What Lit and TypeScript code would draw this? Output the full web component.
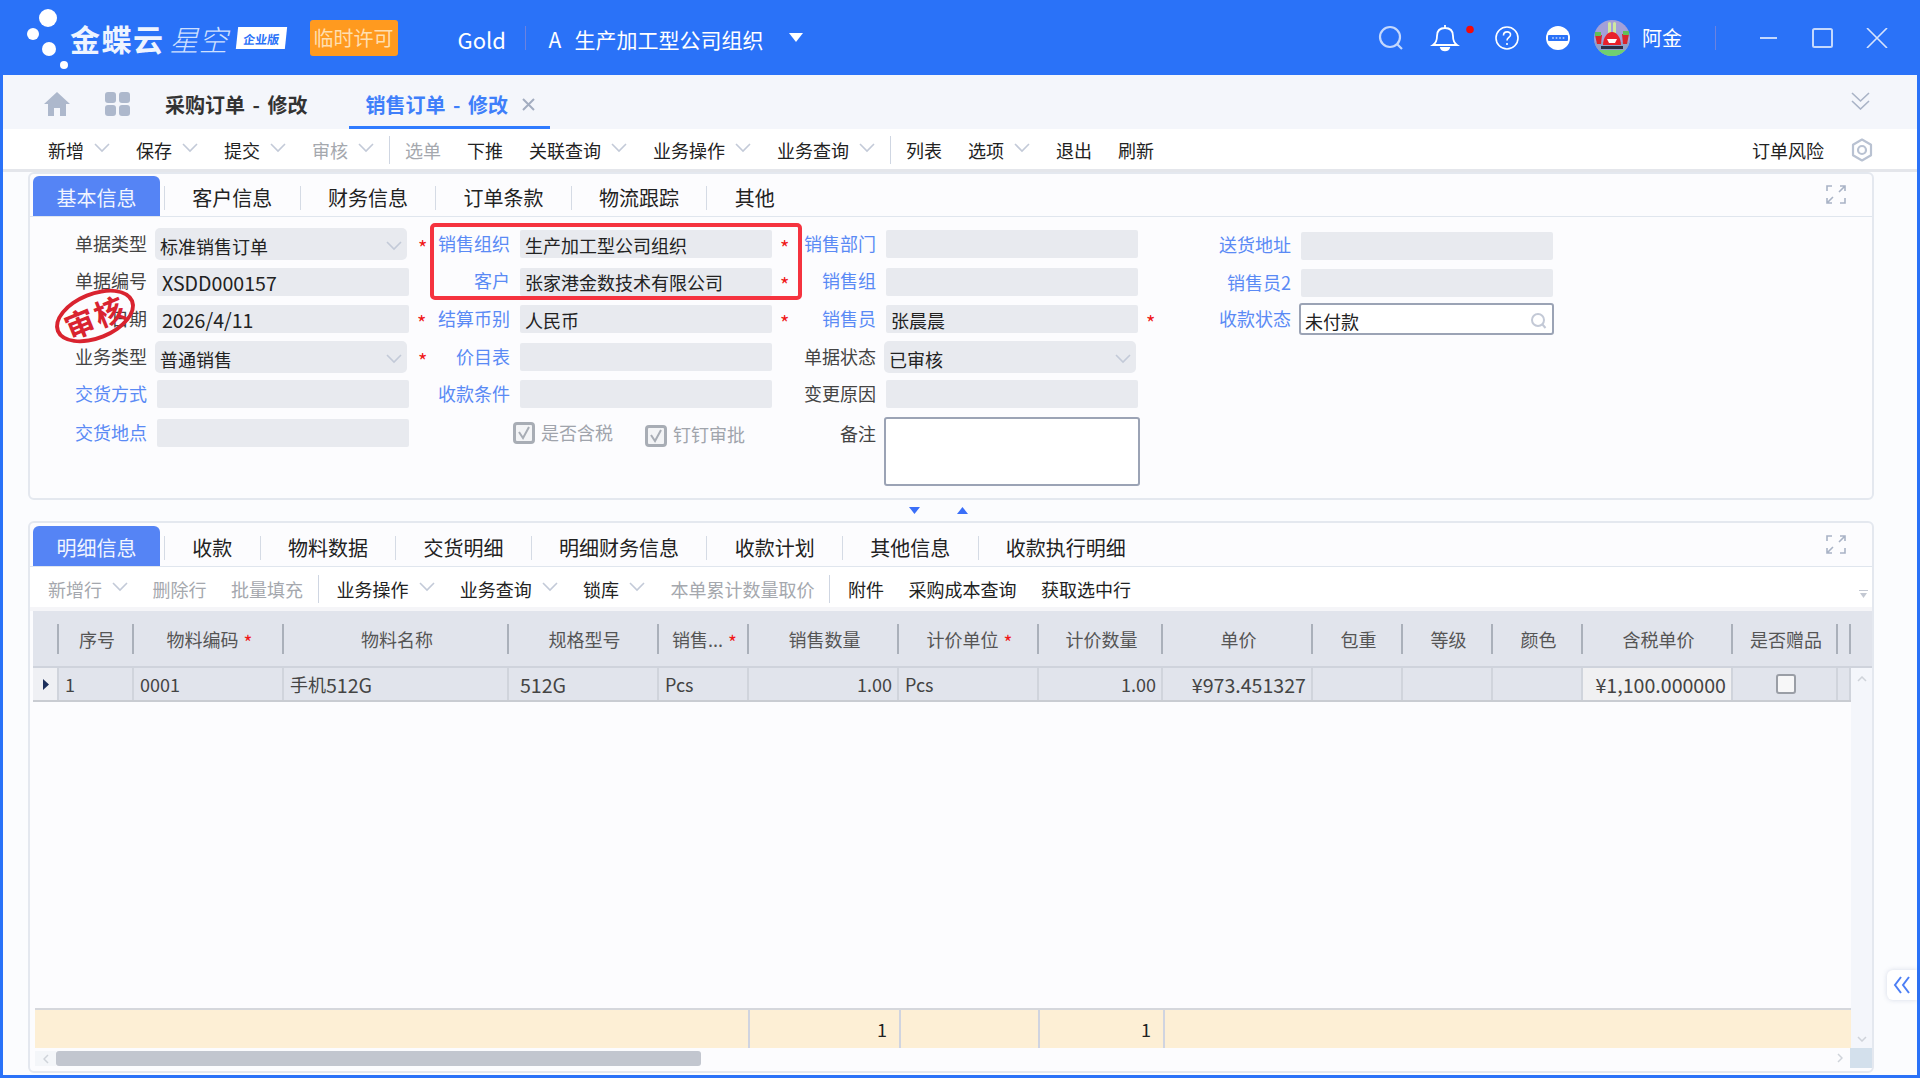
import { LitElement, html, css, svg, nothing } from "lit";
import { customElement } from "lit/decorators.js";

const chevron = html`<svg class="chev" width="16" height="10" viewBox="0 0 16 10"><path d="M1 1l7 7 7-7" fill="none" stroke="#c3cad8" stroke-width="1.6"/></svg>`;

const expand = html`<svg class="expand" width="20" height="19" viewBox="0 0 20 19" fill="none" stroke="#a9b3c6" stroke-width="1.6">
  <path d="M1 6V1h5M19 6V1h-5M13 7l6-6M1 13v5h5M19 13v5h-5M7 12l-6 6"/>
</svg>`;

type Item = { t?: string; gray?: boolean; arrow?: boolean; sep?: boolean };

const mainTools: Item[] = [
  { t: "新增", arrow: true }, { t: "保存", arrow: true }, { t: "提交", arrow: true },
  { t: "审核", arrow: true, gray: true }, { sep: true }, { t: "选单", gray: true }, { t: "下推" },
  { t: "关联查询", arrow: true }, { t: "业务操作", arrow: true }, { t: "业务查询", arrow: true }, { sep: true },
  { t: "列表" }, { t: "选项", arrow: true }, { t: "退出" }, { t: "刷新" },
];

const gridTools: Item[] = [
  { t: "新增行", arrow: true, gray: true }, { t: "删除行", gray: true }, { t: "批量填充", gray: true }, { sep: true },
  { t: "业务操作", arrow: true }, { t: "业务查询", arrow: true }, { t: "锁库", arrow: true },
  { t: "本单累计数量取价", gray: true }, { sep: true }, { t: "附件" }, { t: "采购成本查询" }, { t: "获取选中行" },
];

type Field = { label: string; value?: string; link?: boolean; kind?: string; star?: boolean; low?: boolean; num?: boolean };

const fields: (Field | null)[] = [
  { label: "单据类型", value: "标准销售订单", kind: "select", star: true },
  { label: "销售组织", value: "生产加工型公司组织", link: true, star: true },
  { label: "销售部门", link: true },
  { label: "送货地址", link: true, low: true },

  { label: "单据编号", value: "XSDD000157", num: true },
  { label: "客户", value: "张家港金数技术有限公司", link: true, star: true },
  { label: "销售组", link: true },
  { label: "销售员2", link: true, low: true },

  { label: "日期", value: "2026/4/11", star: true, num: true },
  { label: "结算币别", value: "人民币", link: true, star: true },
  { label: "销售员", value: "张晨晨", link: true, star: true },
  { label: "收款状态", value: "未付款", link: true, kind: "search" },

  { label: "业务类型", value: "普通销售", kind: "select", star: true },
  { label: "价目表", link: true },
  { label: "单据状态", value: "已审核", kind: "select" },
  null,

  { label: "交货方式", link: true },
  { label: "收款条件", link: true },
  { label: "变更原因" },
  null,
];

type Col = { w: number; h?: string; v?: unknown; star?: boolean; right?: boolean; cls?: string };

const cols: Col[] = [
  { w: 26, cls: "arrow" },
  { w: 75, h: "序号", v: "1" },
  { w: 150, h: "物料编码", v: "0001", star: true },
  { w: 225, h: "物料名称", v: html`手机<span class="num">512G</span>` },
  { w: 150, h: "规格型号", v: html`<span class="num">512G</span>`, cls: "pad" },
  { w: 90, h: "销售...", v: "Pcs", star: true },
  { w: 150, h: "销售数量", v: "1.00", right: true },
  { w: 140, h: "计价单位", v: "Pcs", star: true },
  { w: 124, h: "计价数量", v: "1.00", right: true },
  { w: 150, h: "单价", v: html`<span class="num">¥973.451327</span>`, right: true },
  { w: 90, h: "包重" },
  { w: 90, h: "等级" },
  { w: 90, h: "颜色" },
  { w: 150, h: "含税单价", v: html`<span class="num">¥1,100.000000</span>`, right: true, cls: "light" },
  { w: 105, h: "是否赠品", cls: "check" },
  { w: 13 },
];

@customElement("app-root")
export class AppRoot extends LitElement {
  static override styles = css`
    :host {
      display: block;
      width: 1920px;
      height: 1078px;
      overflow: hidden;
      font-family: "Noto Sans CJK SC", "Liberation Sans", sans-serif;
      font-size: 18px;
      color: #222;
    }
    .num { font-size: 19.6px; }
    .app {
      height: 1078px;
      background: #2a72f8;
      display: flex;
      flex-direction: column;
    }
    .top {
      height: 75px;
      flex: none;
      display: flex;
      align-items: center;
      padding: 0 32px 0 24px;
      color: #fff;
      font-size: 21px;
    }
    .brand { font-size: 30px; font-weight: 700; letter-spacing: 1.5px; color: #eef4ff; }
    .brand2 { font-size: 29px; font-weight: 300; font-style: italic; margin-left: 5px; color: #cfe0ff; }
    .badge {
      margin-left: 9px;
      width: 49px;
      height: 22px;
      background: #fff;
      color: #2a72f8;
      font-size: 12px;
      font-weight: 700;
      display: flex;
      align-items: center;
      justify-content: center;
      transform: skewX(-6deg);
      white-space: nowrap;
    }
    .licence {
      margin-left: 24px;
      width: 88px;
      height: 36px;
      border-radius: 3px;
      background: #ff9a1f;
      color: #ffdfb0;
      font-size: 20px;
      display: flex;
      align-items: center;
      justify-content: center;
    }
    .gold { margin-left: 60px; margin-top: 3px; width: 47px; font-size: 22px; }
    .vsep { width: 1px; height: 24px; background: #6b82e0; }
    .gold + .vsep { margin-left: 20px; }
    .a { margin-left: 23px; margin-top: 2px; width: 26px; }
    .org { margin-top: 2px; }
    .tri { margin-left: 25px; }
    .search { margin-left: auto; }
    .bell { margin-left: 27px; overflow: visible; }
    .help { margin-left: 36px; }
    .mins { margin-left: 27px; }
    .avatar { margin-left: 24px; }
    .uname { margin-left: 12px; font-size: 20px; width: 40px; white-space: nowrap; }
    .uname + .vsep { margin-left: 33px; }
    .winmin { margin-left: 44px; }
    .winmax { margin-left: 35px; }
    .winclose { margin-left: 33px; }

    .content {
      flex: 1;
      margin: 0 3px 3px;
      background: #fbfcfe;
      display: flex;
      flex-direction: column;
      position: relative;
      min-height: 0;
    }
    .tabs {
      height: 54px;
      flex: none;
      background: #f4f6fb;
      display: flex;
      align-items: center;
      padding: 4px 0 0 41px;
      box-sizing: border-box;
    }
    .tabs .grid4 { margin-left: 35px; }
    .doc { margin-left: 35px; font-size: 20px; font-weight: 700; color: #333; word-spacing: 3px; white-space: nowrap; }
    .doc.on {
      margin: -4px 0 0 42px;
      height: 54px;
      width: 201px;
      box-sizing: border-box;
      padding: 7px 0 0 16px;
      color: #3f7ffa;
      border-bottom: 3px solid #2f7bff;
      display: flex;
      align-items: center;
    }
    .doc.on svg { margin-left: 13px; }
    .more { margin-left: auto; margin-right: 47px; margin-top: -6px; }

    .bar {
      display: flex;
      align-items: center;
      background: #fff;
      height: 40px;
      flex: none;
      box-sizing: border-box;
      padding-top: 2px;
      white-space: nowrap;
      color: #222;
    }
    .bar.main { padding-left: 45px; padding-right: 44px; box-shadow: 0 3px 0 #e4e6eb; }
    .bar.sub { padding-left: 18px; padding-top: 3px; }
    .tool { margin-right: 26px; display: flex; align-items: center; }
    .tool.gray { color: #a5a8ae; }
    .chev { margin-left: 10px; margin-top: -4px; }
    .tsep { width: 1px; height: 28px; background: #cfd6e2; margin-left: -11px; margin-right: 15px; }
    .sub .tsep { margin-left: -10px; margin-right: 18px; }
    .sub .tool { margin-right: 24.5px; }
    .sub .tool:not(.gray) .chev { margin-right: 0.8px; }
    .risk { margin-left: auto; margin-right: 27px; }
    .overflow { margin-left: auto; margin-right: 4px; margin-top: 12px; }

    .panel {
      margin: 3px 43px 0 25px;
      border: 2px solid #e4e8ef;
      border-radius: 6px;
      background: #fcfcfe;
      position: relative;
      display: flex;
      flex-direction: column;
    }
    .panel.head { height: 328px; box-sizing: border-box; }
    .panel.detail { margin-top: 0; flex: 1; min-height: 0; margin-bottom: 2px; }
    .tabline {
      height: 41px;
      flex: none;
      box-sizing: border-box;
      margin-top: 2px;
      padding-left: 3px;
      display: flex;
      align-items: flex-end;
      border-bottom: 1px solid #e0e6ee;
      font-size: 20px;
      color: #222;
    }
    .detail .tabline { margin-top: 3px; }
    .tabline .tab {
      height: 40px;
      box-sizing: border-box;
      display: flex;
      align-items: center;
      padding: 2px 27.3px 0;
      white-space: nowrap;
    }
    .tabline .tab.on {
      width: 127px;
      justify-content: center;
      padding: 2px 0 0;
      margin-right: 4px;
      background: #5584f5;
      color: #f1f5ff;
      border-radius: 6px 6px 0 0;
    }
    .tabline .div { width: 1px; height: 24px; background: #d5dbe5; margin-bottom: 6px; }
    .tabline .expand { margin-left: auto; margin-right: 26px; margin-bottom: 12px; }

    .form {
      display: grid;
      grid-template-columns: 363px 366px 415px 1fr;
      grid-template-rows: 38px 37px 38px 38px 36px 42px;
      padding: 8px 0 0 45px;
    }
    .field { display: flex; align-items: center; min-width: 0; }
    .field.low { margin-top: 3px; }
    .field.tall { align-items: flex-start; margin-top: 5px; }
    .field.tall .lab { line-height: 32px; }
    .lab { width: 72px; margin-right: 10px; padding-bottom: 3px; text-align: right; color: #444; white-space: nowrap; flex: none; }
    .lab.link { color: #5a8af5; }
    .box {
      width: 252px;
      height: 28px;
      box-sizing: border-box;
      background: #e8eaef;
      border-radius: 2px;
      padding: 1px 5px 0;
      display: flex;
      align-items: center;
      justify-content: space-between;
      color: #222;
      white-space: nowrap;
      flex: none;
    }
    .box.select { height: 32px; margin-left: -2px; border-radius: 5px; padding-top: 3px; }
    .box.select + .star { margin-left: 11px; }
    .box.select .chev { margin: 0; }
    .box.search {
      width: 255px;
      height: 32px;
      margin-left: -2px;
      background: #fff;
      border: 2px solid #9ba3b5;
      border-radius: 3px;
      padding: 3px 4px 0;
    }
    .box.area {
      width: 256px;
      height: 69px;
      margin-left: -2px;
      background: #fff;
      border: 2px solid #9ba3b5;
      border-radius: 3px;
    }
    .star { color: #f01818; font-size: 20px; line-height: 1; margin-left: 8px; padding-top: 7px; }
    .checks { display: flex; align-items: center; padding-left: 75px; color: #a0a4ac; }
    .ck { display: flex; align-items: center; gap: 6px; white-space: nowrap; }
    .ck span { padding-bottom: 3px; }
    .ck + .ck { margin-left: 32px; margin-top: 5px; }

    .redbox {
      position: absolute;
      left: 400px;
      top: 49px;
      width: 372px;
      height: 77px;
      box-sizing: border-box;
      border: 4px solid #f5333f;
      border-radius: 5px;
      pointer-events: none;
    }
    .stamp {
      position: absolute;
      left: 23px;
      top: 118px;
      width: 84px;
      height: 48px;
      box-sizing: border-box;
      border: 4px solid #d9232f;
      border-radius: 50%;
      transform: rotate(-22deg);
      color: #d9232f;
      font-size: 30px;
      font-weight: 700;
      letter-spacing: 2px;
      display: flex;
      align-items: center;
      justify-content: center;
      white-space: nowrap;
    }

    .split {
      height: 21px;
      flex: none;
      display: flex;
      align-items: center;
      padding-left: 906px;
      gap: 37px;
    }

    .gap { height: 4px; flex: none; background: #f5f5f8; }
    .ghead {
      height: 57px;
      flex: none;
      box-sizing: border-box;
      margin-left: 3px;
      display: flex;
      align-items: center;
      background: #e1e4ec;
      border-bottom: 2px solid #cfd3dc;
      color: #555;
    }
    .hcell {
      box-sizing: border-box;
      height: 30px;
      padding-left: 3px;
      border-right: 2px solid #aab0ba;
      display: flex;
      align-items: center;
      justify-content: center;
      gap: 5px;
      white-space: nowrap;
      flex: none;
    }
    .hcell .req { color: #f01818; font-size: 19px; line-height: 1; padding-top: 5px; }
    .gbody { flex: 1; min-height: 0; display: flex; padding-left: 3px; }
    .gleft { flex: 1; display: flex; flex-direction: column; min-width: 0; }
    .rows { flex: 1; }
    .row {
      height: 34px;
      box-sizing: border-box;
      display: flex;
      background: #e1e4ec;
      border-bottom: 2px solid #c9ccd2;
      color: #444;
    }
    .cell {
      box-sizing: border-box;
      flex: none;
      height: 32px;
      padding: 0 5px 0 6px;
      border-right: 2px solid #d0d4dc;
      display: flex;
      align-items: center;
      white-space: pre;
      overflow: hidden;
    }
    .cell.right { justify-content: flex-end; }
    .cell.pad { padding-left: 11px; }
    .cell.light { background: #f0f0f2; }
    .cell.arrow { background: #eff0f4; padding: 0 0 0 10px; }
    .cell.check { justify-content: center; padding: 0 0 0 2px; }
    .cbx { width: 20px; height: 20px; box-sizing: border-box; border: 2px solid #9a9ea6; border-radius: 3px; background: #f7f7f8; }
    .foot {
      height: 40px;
      flex: none;
      box-sizing: border-box;
      margin-left: 2px;
      display: flex;
      background: #fdefd5;
      border-top: 2px solid #d5d7dc;
    }
    .fcell { box-sizing: border-box; flex: none; border-right: 2px solid #d0d4e0; display: flex; align-items: center; justify-content: flex-end; padding-right: 12px; }
    .vbar {
      width: 21px;
      flex: none;
      background: #f4f6fb;
      display: flex;
      flex-direction: column;
      align-items: center;
      justify-content: space-between;
      padding: 8px 0 6px;
      box-sizing: border-box;
    }
    .hbar { height: 23px; flex: none; display: flex; padding-left: 5px; }
    .hleft { width: 21px; height: 15px; margin-top: 3px; background: #f4f6f9; display: flex; align-items: center; justify-content: center; }
    .thumb { width: 645px; height: 15px; margin-top: 3px; border-radius: 3px; background: #c2c6cf; }
    .hright { margin-left: auto; margin-right: 7px; margin-top: 5px; }
    .corner { width: 22px; height: 20px; background: #d3e0ec; flex: none; }

    .handle {
      position: absolute;
      right: 0;
      top: 895px;
      width: 30px;
      height: 30px;
      background: #fff;
      border-radius: 6px 0 0 6px;
      box-shadow: 0 0 5px rgba(80, 100, 150, 0.22);
      display: flex;
      align-items: center;
      justify-content: center;
    }
  `;

  private tools(items: Item[]) {
    return items.map((i) =>
      i.sep
        ? html`<span class="tsep"></span>`
        : html`<span class="tool ${i.gray ? "gray" : ""}">${i.t}${i.arrow ? chevron : nothing}</span>`
    );
  }

  private tabs(names: string[]) {
    return names.map((n, i) =>
      i === 0
        ? html`<span class="tab on">${n}</span><span class="div"></span>`
        : html`<span class="tab">${n}</span>${i < names.length - 1 ? html`<span class="div"></span>` : nothing}`
    );
  }

  private field(f: Field | null) {
    if (!f) return html`<div></div>`;
    let inner;
    if (f.kind === "select") inner = html`<div class="box select">${f.value}${chevron}</div>`;
    else if (f.kind === "search")
      inner = html`<div class="box search">${f.value}<svg width="18" height="18" viewBox="0 0 18 18" fill="none" stroke="#c3c9d6" stroke-width="2"><circle cx="8" cy="8" r="6"/><path d="M12.5 12.5l3 3.5"/></svg></div>`;
    else inner = html`<div class="box"><span class="${f.num ? "num" : ""}">${f.value ?? ""}</span></div>`;
    return html`<div class="field ${f.low ? "low" : ""}">
      <span class="lab ${f.link ? "link" : ""}">${f.label}</span>${inner}${f.star ? html`<span class="star">*</span>` : nothing}
    </div>`;
  }

  private checked(label: string) {
    return html`<span class="ck"
      ><svg width="22" height="22" viewBox="0 0 22 22"><rect x="1.5" y="1.5" width="19" height="19" rx="2.5" fill="#f3f4f6" stroke="#a8adb5" stroke-width="3"/><path d="M6 10l4 6 6-11" fill="none" stroke="#a8adb5" stroke-width="2"/></svg
      ><span>${label}</span></span
    >`;
  }

  private avatar() {
    return svg`<svg class="avatar" width="36" height="36" viewBox="0 0 36 36">
      <defs><clipPath id="av"><circle cx="18" cy="18" r="18"/></clipPath></defs>
      <g clip-path="url(#av)">
        <rect width="36" height="36" fill="#a3a0d8"/>
        <rect y="22" width="36" height="14" fill="#8fa0c8"/>
        <rect x="14" y="2" width="3" height="13" rx="1.5" fill="#cfe8a0"/>
        <rect x="19" y="2" width="3" height="13" rx="1.5" fill="#cfe8a0"/>
        <path d="M18 12c5 0 9 6 9 13H9c0-7 4-13 9-13z" fill="#e8202a"/>
        <path d="M13 19h10l-2 4h-6z" fill="#fff"/>
        <path d="M1 15h7l-1 9H3zM28 14h7l-2 10h-4z" fill="#d8262c"/>
        <rect x="1" y="12" width="6" height="4" fill="#5fbf5a"/>
        <rect x="29" y="11" width="6" height="4" fill="#5fbf5a"/>
        <rect x="7" y="26" width="22" height="3" fill="#2a2f45"/>
        <rect y="30" width="36" height="6" fill="#6fd070"/>
      </g>
    </svg>`;
  }

  override render() {
    return html`
      <div class="app">
        <header class="top">
          <svg width="46" height="75" viewBox="0 0 46 75" fill="#fff">
            <circle cx="24" cy="18" r="9"/><circle cx="9" cy="34" r="6"/><circle cx="25" cy="49" r="7"/><circle cx="40" cy="65" r="4"/>
          </svg>
          <span class="brand">金蝶云</span>
          <span class="brand2">星空</span>
          <span class="badge">企业版</span>
          <span class="licence">临时许可</span>
          <span class="gold">Gold</span>
          <span class="vsep"></span>
          <span class="a">A</span>
          <span class="org">生产加工型公司组织</span>
          <svg class="tri" width="14" height="9" viewBox="0 0 14 9"><path d="M0 0h14L7 9z" fill="#fff"/></svg>

          <svg class="search" width="26" height="26" viewBox="0 0 26 26" fill="none" stroke="#c4d8fd" stroke-width="2.2"><circle cx="12" cy="12" r="10"/><path d="M19 19l5 5"/></svg>
          <svg class="bell" width="28" height="28" viewBox="0 0 28 28" fill="none" stroke="#fff" stroke-width="1.8">
            <path d="M2 21h24c-3-2-4-4-4-9 0-5-3-8-8-8s-8 3-8 8c0 5-1 7-4 9zM14 1v3"/><path d="M10 24h8c-1 3-7 3-8 0z" fill="#fff"/>
            <circle cx="39" cy="5.500" r="3.800" fill="#f50a0a" stroke="none"/>
          </svg>
          <svg class="help" width="24" height="24" viewBox="0 0 24 24" fill="none" stroke="#fff" stroke-width="1.6">
            <circle cx="12" cy="12" r="11"/><path d="M8.5 9.5c0-5 7.5-4.5 7-.5-.3 2.5-3.5 2.5-3.5 5.5"/><path d="M12 17v2"/>
          </svg>
          <svg class="mins" width="24" height="24" viewBox="0 0 24 24">
            <circle cx="12" cy="12" r="12" fill="#fff"/><rect x="2" y="9" width="20" height="6" rx="1" fill="#2a72f8"/>
            <g fill="#a9c6fb"><circle cx="7" cy="12" r="1"/><circle cx="10.5" cy="12" r="1"/><circle cx="14" cy="12" r="1"/><circle cx="17.5" cy="12" r="1"/></g>
          </svg>
          ${this.avatar()}
          <span class="uname">阿金</span>
          <span class="vsep"></span>
          <svg class="winmin" width="17" height="2" viewBox="0 0 17 2"><rect width="17" height="2" fill="#c4d8fd"/></svg>
          <svg class="winmax" width="21" height="20" viewBox="0 0 21 20" fill="none" stroke="#c4d8fd" stroke-width="2"><rect x="1" y="1" width="19" height="18" rx="1.5"/></svg>
          <svg class="winclose" width="22" height="20" viewBox="0 0 22 20" fill="none" stroke="#d6e3fd" stroke-width="1.6"><path d="M1 0l20 20M21 0L1 20"/></svg>
        </header>

        <div class="content">
          <nav class="tabs">
            <svg width="26" height="24" viewBox="0 0 26 24" fill="#adb8cc"><path d="M13 0L0 12h4v12h6v-8h6v8h6V12h4z"/></svg>
            <svg class="grid4" width="25" height="24" viewBox="0 0 25 24" fill="#adb8cc">
              <rect width="11" height="11" rx="3"/><rect x="14" width="11" height="11" rx="3"/><rect y="13" width="11" height="11" rx="3"/><rect x="14" y="13" width="11" height="11" rx="3"/>
            </svg>
            <span class="doc">采购订单 - 修改</span>
            <span class="doc on">销售订单 - 修改<svg width="15" height="15" viewBox="0 0 15 15" fill="none" stroke="#a3adc0" stroke-width="2"><path d="M2 2l11 11M13 2L2 13"/></svg></span>
            <svg class="more" width="19" height="18" viewBox="0 0 19 18" fill="none" stroke="#a9b3c6" stroke-width="1.6"><path d="M1 1l8.500 8 8.500-8M1 9l8.500 8 8.500-8"/></svg>
          </nav>

          <div class="bar main">
            ${this.tools(mainTools)}
            <span class="risk">订单风险</span>
            <svg width="22" height="24" viewBox="0 0 22 24" fill="none" stroke="#b9c2d2" stroke-width="2.2"><path d="M11 1.500l9 5.200v10.600l-9 5.200-9-5.200V6.700z" stroke-linejoin="round"/><circle cx="11" cy="12" r="4"/></svg>
          </div>

          <section class="panel head">
            <div class="tabline">
              ${this.tabs(["基本信息", "客户信息", "财务信息", "订单条款", "物流跟踪", "其他"])}
              ${expand}
            </div>
            <div class="form">
              ${fields.map((f) => this.field(f))}
              <div class="field"><span class="lab link">交货地点</span><div class="box"></div></div>
              <div class="checks">${this.checked("是否含税")}${this.checked("钉钉审批")}</div>
              <div class="field tall"><span class="lab">备注</span><div class="box area"></div></div>
            </div>
            <div class="redbox"></div>
            <div class="stamp">审核</div>
          </section>

          <div class="split">
            <svg width="11" height="7" viewBox="0 0 11 7"><path d="M0 0h11L5.500 7z" fill="#3a6ff8"/></svg>
            <svg width="11" height="7" viewBox="0 0 11 7"><path d="M0 7h11L5.500 0z" fill="#3a6ff8"/></svg>
          </div>

          <section class="panel detail">
            <div class="tabline">
              ${this.tabs(["明细信息", "收款", "物料数据", "交货明细", "明细财务信息", "收款计划", "其他信息", "收款执行明细"])}
              ${expand}
            </div>
            <div class="bar sub">
              ${this.tools(gridTools)}
              <svg class="overflow" width="9" height="9" viewBox="0 0 9 9"><path d="M0 0h9" stroke="#c3c8d2" stroke-width="2"/><path d="M1 3h7L4.500 8z" fill="#c3c8d2"/></svg>
            </div>
            <div class="gap"></div>
            <div class="ghead">
              ${cols.map(
                (c) => html`<div class="hcell" style="width:${c.w}px"><span>${c.h ?? ""}</span>${c.star ? html`<span class="req">*</span>` : nothing}</div>`
              )}
            </div>
            <div class="gbody">
              <div class="gleft">
                <div class="rows">
                  <div class="row">
                    ${cols.map(
                      (c) => html`<div class="cell ${c.right ? "right" : ""} ${c.cls ?? ""}" style="width:${c.w}px">${
                        c.cls === "arrow"
                          ? html`<svg width="6" height="11" viewBox="0 0 6 11"><path d="M0 0l6 5.500-6 5.500z" fill="#1c2f5c"/></svg>`
                          : c.cls === "check"
                            ? html`<span class="cbx"></span>`
                            : c.v ?? ""
                      }</div>`
                    )}
                  </div>
                </div>
                <div class="foot">
                  <div class="fcell" style="width:715px"></div>
                  <div class="fcell" style="width:151px">1</div>
                  <div class="fcell" style="width:139px"></div>
                  <div class="fcell" style="width:125px">1</div>
                </div>
              </div>
              <div class="vbar">
                <svg width="10" height="6" viewBox="0 0 10 6" fill="none" stroke="#cfd3da" stroke-width="1.500"><path d="M1 5l4-4 4 4"/></svg>
                <svg width="10" height="6" viewBox="0 0 10 6" fill="none" stroke="#cfd3da" stroke-width="1.500"><path d="M1 1l4 4 4-4"/></svg>
              </div>
            </div>
            <div class="hbar">
              <span class="hleft"><svg width="6" height="10" viewBox="0 0 6 10" fill="none" stroke="#cfd3da" stroke-width="1.500"><path d="M5 1L1 5l4 4"/></svg></span>
              <div class="thumb"></div>
              <svg class="hright" width="6" height="10" viewBox="0 0 6 10" fill="none" stroke="#cfd3da" stroke-width="1.500"><path d="M1 1l4 4-4 4"/></svg>
              <div class="corner"></div>
            </div>
          </section>

          <div class="handle">
            <svg width="18" height="18" viewBox="0 0 18 18" fill="none" stroke="#4d7ff5" stroke-width="2"><path d="M8 1L2 9l6 8M16 1l-6 8 6 8"/></svg>
          </div>
        </div>
      </div>
    `;
  }
}
